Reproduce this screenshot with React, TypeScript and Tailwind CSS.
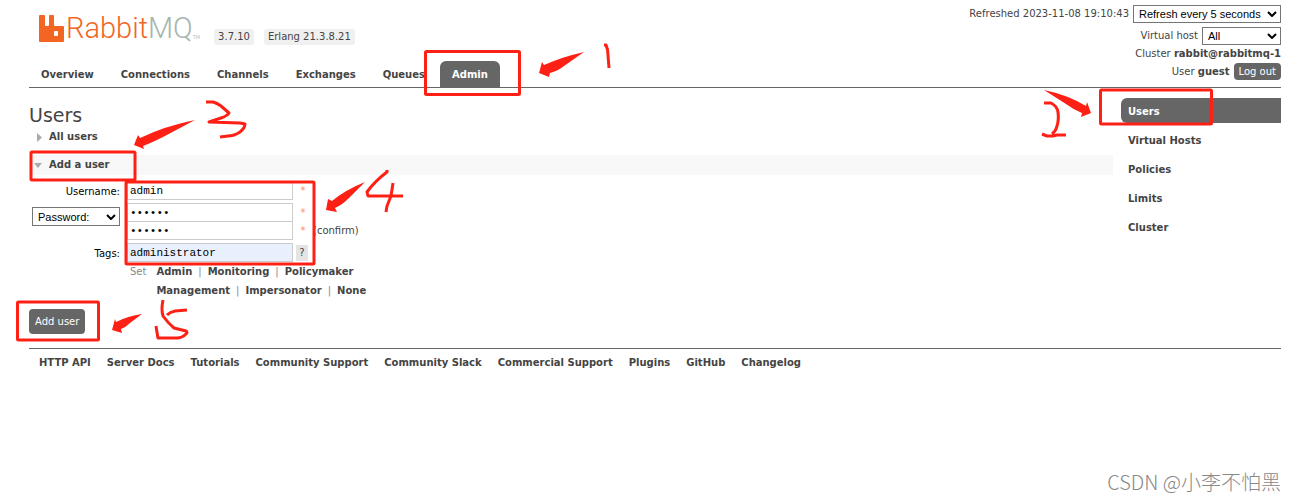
import React, { useState } from 'react';

const tabs = ['Overview', 'Connections', 'Channels', 'Exchanges', 'Queues', 'Admin'];
const sections = ['Users', 'Virtual Hosts', 'Policies', 'Limits', 'Cluster'];
const tagRows = [
	['Admin', 'Monitoring', 'Policymaker'],
	['Management', 'Impersonator', 'None'],
];
const footerLinks = [
	'HTTP API',
	'Server Docs',
	'Tutorials',
	'Community Support',
	'Community Slack',
	'Commercial Support',
	'Plugins',
	'GitHub',
	'Changelog',
];

const inputStyle =
	'h-[19px] w-[166px] border border-[#ccc] px-[2px] font-["Liberation_Mono",monospace] text-[11px] text-black outline-none';

type SelectProps = {
	id: string;
	label: string;
	options: string[];
	className: string;
};

const Select = ({ id, label, options, className }: SelectProps) => (
	<span className={`relative inline-flex text-[11px] ${className}`}>
		<select
			id={id}
			aria-label={label}
			className="w-full appearance-none border border-[#767676] bg-white pl-[5px] font-['Liberation_Sans',sans-serif] text-black outline-none"
		>
			{options.map((option) => (
				<option key={option}>{option}</option>
			))}
		</select>
		<svg
			viewBox="0 0 10 6"
			className="pointer-events-none absolute top-1/2 right-1 h-[6px] w-[10px] -translate-y-1/2"
		>
			<path d="M1 1l4 4 4-4" fill="none" stroke="#000" strokeWidth="2" />
		</svg>
	</span>
);

const Logo = () => (
	<a href="#" className="flex items-center">
		<svg viewBox="0 0 25 27" className="h-[27px] w-[25px]">
			<path
				fill="#f26522"
				fillRule="evenodd"
				d="M1 0h4q1 0 1 1v9q0 1 1 1h2q1 0 1-1V1q0-1 1-1h3q1 0 1 1v9q0 1 1 1h8q1 0 1 1v14q0 1-1 1H1q-1 0-1-1V1q0-1 1-1zM15 17v3q0 1 1 1h2q1 0 1-1v-3q0-1-1-1h-2q-1 0-1 1z"
			/>
		</svg>
		<span className="ml-[2px] font-['Roboto',sans-serif] text-[29px] leading-[34px] font-light text-[#f26522]">
			Rabbit<span className="text-[#a6b5ae]">MQ</span>
		</span>
		<span className="self-end text-[5px] text-[#bbb]">TM</span>
	</a>
);

const Header = () => (
	<header className="flex items-end justify-between border-b border-[#666]">
		<div>
			<div className="flex items-end pl-[10px]">
				<Logo />
				<span className="ml-[14px] rounded-[3px] bg-[#f0f0f0] px-1 leading-4">3.7.10</span>
				<span className="ml-[10px] rounded-[3px] bg-[#f0f0f0] px-1 leading-4">
					Erlang 21.3.8.21
				</span>
			</div>
			<nav className="mt-4 flex gap-[3px] font-bold">
				{tabs.map((tab) => (
					<a
						key={tab}
						href="#"
						className={`rounded-t-md px-3 pt-[6px] pb-1 leading-4 ${
							tab === 'Admin' ? 'bg-[#666] text-white' : ''
						}`}
					>
						{tab}
					</a>
				))}
			</nav>
		</div>
		<div className="flex flex-col items-end pt-[5px] pb-[7px]">
			<div className="flex items-center gap-1">
				<span>Refreshed 2023-11-08 19:10:43</span>
				<Select
					id="refresh"
					label="Refresh"
					options={['Refresh every 5 seconds']}
					className="h-[18px] w-[148px]"
				/>
			</div>
			<div className="mt-1 flex items-center gap-1">
				<label htmlFor="vhost">Virtual host</label>
				<Select id="vhost" label="Virtual host" options={['All']} className="h-[18px] w-[79px]" />
			</div>
			<div className="leading-[18px]">
				Cluster <b>rabbit@rabbitmq-1</b>
			</div>
			<div className="flex items-center gap-1">
				<span>
					User <b>guest</b>
				</span>
				<button className="h-[17px] rounded-[4px] bg-[#666] px-[5px] text-white">Log out</button>
			</div>
		</div>
	</header>
);

const Star = () => <span className="w-[20px] text-center text-[#f88]">*</span>;

const UserForm = () => {
	const [username, setUsername] = useState('admin');
	const [password, setPassword] = useState('secret');
	const [confirm, setConfirm] = useState('secret');
	const [userTags, setUserTags] = useState('administrator');

	return (
		<form className="pt-[6px]" onSubmit={(e) => e.preventDefault()}>
			<div className="grid grid-cols-[91px_1fr] gap-x-[7px] gap-y-[3px]">
				<label htmlFor="username" className="pt-[3px] text-right text-black">
					Username:
				</label>
				<div className="flex items-center">
					<input
						id="username"
						value={username}
						onChange={(e) => setUsername(e.target.value)}
						className={inputStyle}
					/>
					<Star />
				</div>
				<div className="flex items-start justify-end pt-1">
					<Select
						id="password-type"
						label="Password type"
						options={['Password:']}
						className="h-[19px] w-[88px]"
					/>
				</div>
				<div>
					<div className="flex items-center">
						<input
							type="password"
							aria-label="Password"
							value={password}
							onChange={(e) => setPassword(e.target.value)}
							className={inputStyle}
						/>
						<Star />
					</div>
					<div className="-mt-px flex items-center">
						<input
							type="password"
							aria-label="Confirm password"
							value={confirm}
							onChange={(e) => setConfirm(e.target.value)}
							className={inputStyle}
						/>
						<Star />
						<span>(confirm)</span>
					</div>
				</div>
				<label htmlFor="tags" className="pt-[3px] text-right text-black">
					Tags:
				</label>
				<div>
					<div className="flex items-center gap-[3px]">
						<input
							id="tags"
							value={userTags}
							onChange={(e) => setUserTags(e.target.value)}
							className={`${inputStyle} bg-[#e8f0fe]`}
						/>
						<button type="button" className="h-4 w-3 bg-[#e4e4e4]">
							?
						</button>
					</div>
					<div className="flex gap-[10px] pl-[3px] leading-[19px]">
						<span className="text-[#888]">Set</span>
						<div>
							{tagRows.map((row) => (
								<div key={row[0]} className="flex gap-[6px]">
									{row.map((tag, i) => (
										<React.Fragment key={tag}>
											{i > 0 && <span className="text-[#888]">|</span>}
											<a href="#" className="font-bold">
												{tag}
											</a>
										</React.Fragment>
									))}
								</div>
							))}
						</div>
					</div>
				</div>
			</div>
			<button className="mt-[9px] h-[25px] rounded-[4px] bg-[#666] px-[6px] text-white">
				Add user
			</button>
		</form>
	);
};

// hand drawn marks on top of the page, left part
const LeftMarks = () => (
	<svg
		viewBox="0 0 640 350"
		className="pointer-events-none absolute top-0 left-0 h-[350px] w-[640px]"
	>
		<g fill="none" stroke="#ff2015" strokeWidth="3" strokeLinejoin="round">
			<rect x="425.5" y="51.5" width="94" height="43" rx="1" />
			<rect x="31" y="152" width="104" height="28" rx="1" />
			<rect x="126" y="182" width="188" height="82" rx="1" />
			<rect x="17.5" y="302" width="81" height="38" rx="1" />
			<path d="M604 45h2q2 4 2 10l1 13" />
			<path d="M206 102h7q4 1 8 4l8 7q-2 3-8 5l-12 4 31 1 5 1q0 4-5 8-6 4-12 4l-8 1" />
			<path d="M387 170v2q-12 9-20 20l1 4h35M393 183l-2 13-4 10-1 6" />
			<path d="M163 300q-2 10 0 16 5 7 11 12l12 3q2 1 0 3-4 4-9 4h-19q-1-5-2-12M167 315q3-3 8-4l12-1" />
		</g>
		<g fill="#ff2015">
			<path d="M584 52Q562 57 544 65l-2-3-3 11 10 4 1-4q8-2 14-7z" />
			<path d="M195 120Q165 126 140 138l-2-3-4 10 10 4-1-3q8-3 20-9z" />
			<path d="M365 182Q345 190 332 201l-4-2-2 11 11 2-2-4q7-3 14-10z" />
			<path d="M142 314Q128 316 116 322l-1-3-3 11 10 3-1-4q5-2 9-6z" />
		</g>
	</svg>
);

const RightMarks = () => (
	<svg
		viewBox="1016 0 280 150"
		className="pointer-events-none absolute top-0 right-0 h-[150px] w-[280px]"
	>
		<g fill="none" stroke="#ff2015" strokeWidth="3" strokeLinejoin="round">
			<rect x="1100.5" y="90" width="111" height="34" rx="1" />
			<path d="M1044 103h7q6 3 7 9 1 8-1 14-1 5-5 8M1042 134l5 2h6l4-1h9" />
		</g>
		<path d="M1044 90Q1068 95 1086 106l1-4 4 11-10 4 1-4q-8-3-16-9z" fill="#ff2015" />
	</svg>
);

const App = () => {
	return (
		<div className="relative min-h-screen bg-white pr-[15px] pl-[29px] font-['DejaVu_Sans',sans-serif] text-[10px] leading-4 text-[#444]">
			<Header />
			<div className="flex gap-2">
				<main className="min-w-0 flex-1 pt-[15px]">
					<h1 className="text-[19px] leading-6">Users</h1>
					<h2 className="flex items-center gap-[7px] pl-2 leading-[20px] font-bold">
						<svg viewBox="0 0 5 9" className="h-[9px] w-[5px]">
							<path d="M0 0l5 4.5L0 9z" fill="#aaa" />
						</svg>
						All users
					</h2>
					<h2 className="mt-2 flex items-center gap-[7px] bg-[#f8f8f8] pl-[5px] leading-[20px] font-bold">
						<svg viewBox="0 0 8 5" className="h-[5px] w-[8px]">
							<path d="M0 0h8L4 5z" fill="#aaa" />
						</svg>
						Add a user
					</h2>
					<UserForm />
				</main>
				<nav className="flex w-40 flex-col gap-1 pt-[10px] font-bold">
					{sections.map((section) => (
						<a
							key={section}
							href="#"
							className={`rounded-l-md pt-[5px] pb-[3px] pl-[7px] leading-[17px] ${
								section === 'Users' ? 'bg-[#666] text-white' : ''
							}`}
						>
							{section}
						</a>
					))}
				</nav>
			</div>
			<footer className="mt-[14px] flex gap-4 border-t border-[#666] pt-[6px] pl-[10px] font-bold">
				{footerLinks.map((link) => (
					<a key={link} href="#">
						{link}
					</a>
				))}
			</footer>
			<LeftMarks />
			<RightMarks />
			<div className="absolute right-[15px] bottom-[5px] font-['Noto_Sans_CJK_SC',sans-serif] text-[20px] leading-7 font-light text-[#888]">
				CSDN @小李不怕黑
			</div>
		</div>
	);
};

export default App;
